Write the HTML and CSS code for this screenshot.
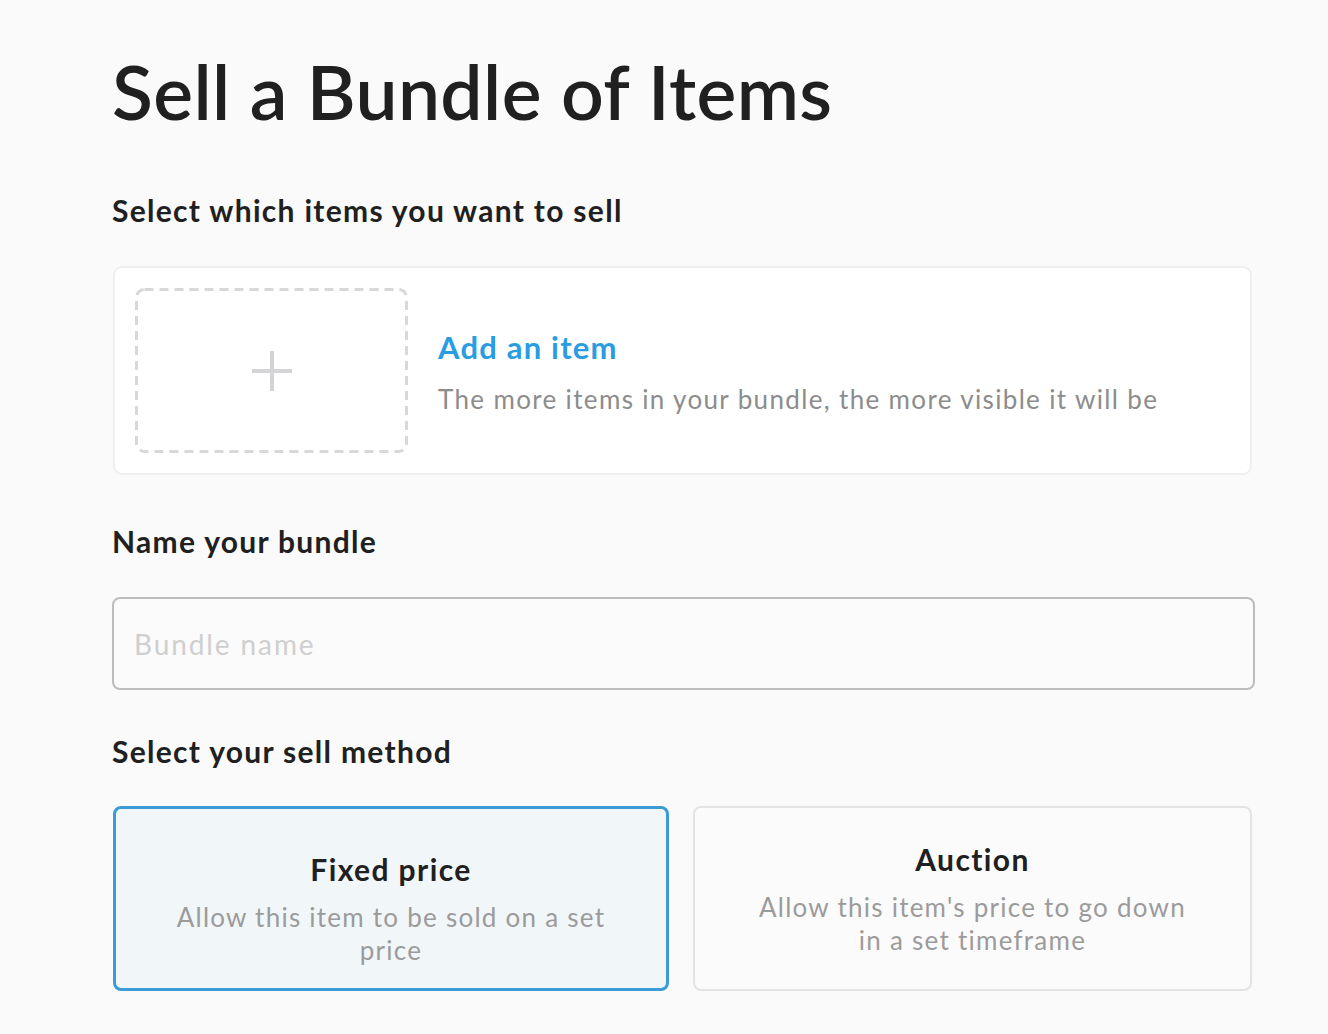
FILE: index.html
```html
<!DOCTYPE html>
<html>
<head>
<meta charset="utf-8">
<link rel="stylesheet" href="styles.css">
</head>
<body>
<main class="page">
  <h1 class="title">Sell a Bundle of Items</h1>

  <h2 class="section-label label-items">Select which items you want to sell</h2>
  <div class="items-card">
    <div class="add-box">
      <svg class="dash" width="273" height="165" viewBox="0 0 273 165"><rect x="1.5" y="1.5" width="270" height="162" rx="8" ry="8" fill="none" stroke="#d8d8d8" stroke-width="3" stroke-dasharray="9 6"/></svg>
      <svg class="plus" width="40" height="40" viewBox="0 0 40 40"><path d="M20 0V40M0 20H40" stroke="#d4d4d6" stroke-width="4" fill="none"/></svg>
    </div>
    <div class="add-text">
      <div class="add-title">Add an item</div>
      <div class="add-desc">The more items in your bundle, the more visible it will be</div>
    </div>
  </div>

  <h2 class="section-label label-name">Name your bundle</h2>
  <input class="name-input" type="text" placeholder="Bundle name">

  <h2 class="section-label label-method">Select your sell method</h2>
  <div class="methods">
    <div class="method selected">
      <div class="method-title">Fixed price</div>
      <div class="method-desc">Allow this item to be sold on a set price</div>
    </div>
    <div class="method">
      <div class="method-title">Auction</div>
      <div class="method-desc">Allow this item's price to go down in a set timeframe</div>
    </div>
  </div>
</main>
</body>
</html>
```
FILE: styles.css
```css
html, body {
  margin: 0;
  padding: 0;
  background: #fafafa;
}
body {
  font-family: Lato, "Noto Sans", sans-serif;
  color: #202020;
}
.page {
  width: 1142px;
  margin-left: 112px;
  padding-top: 46px;
}
.title {
  margin: 0;
  font-size: 75px;
  font-weight: 600;
  line-height: 90px;
  letter-spacing: 0.4px;
}
.section-label {
  margin: 0;
  font-size: 30px;
  font-weight: 700;
  line-height: 40px;
  letter-spacing: 1.3px;
}
.label-items { margin-top: 54px; }
.items-card {
  margin-top: 36px;
  margin-left: 1px;
  width: 1139px;
  height: 209px;
  box-sizing: border-box;
  background: #fff;
  border: 2px solid #efefef;
  border-radius: 9px;
  display: flex;
  align-items: center;
  padding-left: 20px;
}
.add-box {
  position: relative;
  width: 273px;
  height: 165px;
  display: flex;
  align-items: center;
  justify-content: center;
}
.dash {
  position: absolute;
  left: 0;
  top: 0;
}
.add-text {
  margin-left: 30px;
  margin-top: 2px;
}
.add-title {
  color: #2a9de2;
  font-size: 31px;
  font-weight: 700;
  line-height: 40px;
  letter-spacing: 1.2px;
}
.add-desc {
  margin-top: 15px;
  color: #8c8c8c;
  font-size: 26px;
  line-height: 34px;
  letter-spacing: 1.35px;
}
.label-name { margin-top: 46px; }
.name-input {
  display: block;
  margin-top: 36px;
  width: 1143px;
  height: 93px;
  box-sizing: border-box;
  border: 2px solid #bdbdbd;
  border-radius: 8px;
  background: #fbfbfb;
  padding: 0 20px;
  font-family: Lato, "Noto Sans", sans-serif;
  font-size: 28px;
  letter-spacing: 1.9px;
  color: #333;
  outline: none;
}
.name-input::placeholder { color: #cfcfcf; }
.label-method { margin-top: 41px; }
.methods {
  margin-top: 35px;
  margin-left: 1px;
  width: 1139px;
  display: flex;
  gap: 24px;
}
.method {
  flex: 1;
  height: 185px;
  box-sizing: border-box;
  border: 2px solid #e3e3e3;
  border-radius: 8px;
  background: #fbfbfb;
  display: flex;
  flex-direction: column;
  align-items: center;
  justify-content: center;
  text-align: center;
  padding: 0 58px;
}
.method.selected {
  flex: 0 0 556px;
  border: 3px solid #3a9bd6;
  background: #f1f6f9;
  padding-top: 20px;
}
.method-title {
  font-size: 30px;
  font-weight: 700;
  line-height: 38px;
  letter-spacing: 1.4px;
}
.method-desc {
  margin-top: 13px;
  color: #9b9b9b;
  font-size: 26px;
  line-height: 33px;
  letter-spacing: 1.25px;
}
```
